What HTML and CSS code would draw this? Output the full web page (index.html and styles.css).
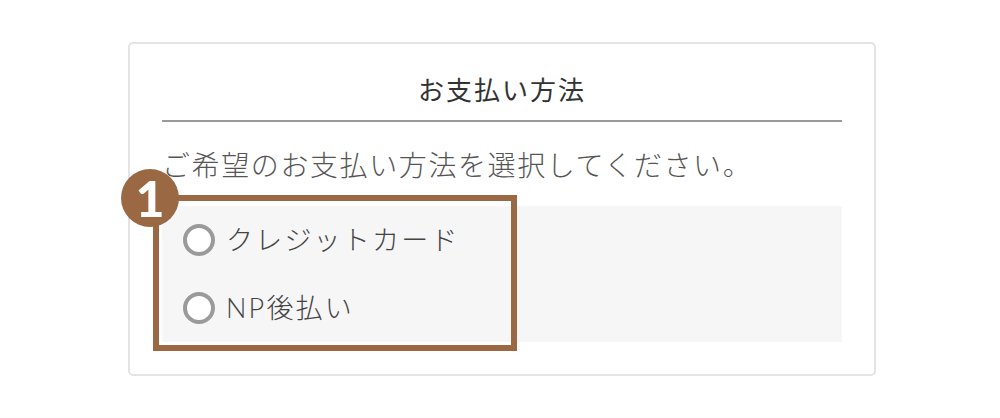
FILE: index.html
```html
<!DOCTYPE html>
<html lang="ja">
<head>
<meta charset="utf-8">
<title>お支払い方法</title>
<link rel="stylesheet" href="styles.css">
</head>
<body>
<div class="page">
  <section class="card">
    <h2 class="card-title">お支払い方法</h2>
    <p class="lead">ご希望のお支払い方法を選択してください。</p>
    <div class="options">
      <label class="option"><span class="radio"></span><span class="option-label">クレジットカード</span></label>
      <label class="option"><span class="radio"></span><span class="option-label">NP後払い</span></label>
      <div class="highlight"><span class="badge">1</span></div>
    </div>
  </section>
</div>
</body>
</html>
```
FILE: styles.css
```css
* { box-sizing: border-box; }
html, body { margin: 0; padding: 0; background: #ffffff; }
body {
  font-family: Lato, "Noto Sans CJK JP", "Noto Sans", sans-serif;
  color: #333;
}
.page {
  padding: 42px 0 0 128px;
}
.card {
  width: 748px;
  height: 334px;
  border: 2px solid #e4e4e4;
  border-radius: 5px;
  padding: 26px 32px 32px;
}
.card-title {
  margin: 0;
  font-size: 26px;
  font-weight: 400;
  line-height: 40px;
  letter-spacing: 2px;
  text-align: center;
  color: #333;
  padding-bottom: 10px;
  border-bottom: 2px solid #999;
}
.lead {
  margin: 23px 0 0;
  font-size: 28px;
  line-height: 40px;
  font-weight: 300;
  letter-spacing: 1.6px;
  color: #555;
}
.options {
  position: relative;
  margin-top: 21px;
  background: #f6f6f6;
  display: flex;
  flex-direction: column;
}
.option {
  height: 68px;
  display: flex;
  align-items: center;
  padding-left: 21px;
  gap: 11px;
}
.radio {
  width: 32px;
  height: 32px;
  border: 4px solid #9a9a9a;
  border-radius: 50%;
  background: #fff;
  flex: none;
}
.option-label {
  font-size: 27px;
  font-weight: 300;
  letter-spacing: 2.2px;
  color: #444;
  line-height: 40px;
}
.highlight {
  position: absolute;
  left: -9px;
  top: -11px;
  width: 364px;
  height: 156px;
  border: 6px solid #9a6842;
  pointer-events: none;
}
.badge {
  position: absolute;
  left: -38px;
  top: -32px;
  width: 58px;
  height: 58px;
  border-radius: 50%;
  background: #9a6842;
  color: #fff;
  font-family: Lato, "DejaVu Sans", sans-serif;
  font-weight: 900;
  font-size: 50px;
  line-height: 58px;
  text-align: center;
}
```
